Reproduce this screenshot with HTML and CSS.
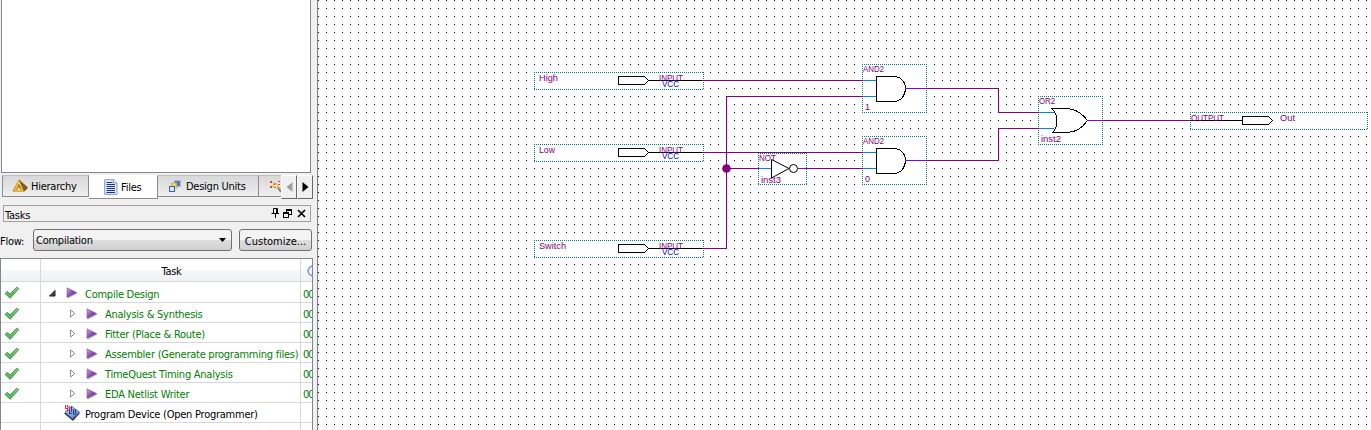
FILE: index.html
```html
<!DOCTYPE html>
<html lang="en">
<head>
<meta charset="utf-8">
<title>Schematic editor</title>
<link rel="stylesheet" href="styles.css">
</head>
<body>
<svg class="defs" width="0" height="0">
  <defs>
    <linearGradient id="gCheck" x1="0" y1="0" x2="0" y2="1"><stop offset="0" stop-color="#7fd07a"/><stop offset="1" stop-color="#4fae52"/></linearGradient>
    <linearGradient id="gPlay" x1="0" y1="0" x2="1" y2="1"><stop offset="0" stop-color="#d9a8e8"/><stop offset=".5" stop-color="#8d4fae"/><stop offset="1" stop-color="#3c2560"/></linearGradient>
    <linearGradient id="gGold" x1="0" y1="0" x2="1" y2="0"><stop offset="0" stop-color="#f5a81c"/><stop offset=".6" stop-color="#ffe25a"/><stop offset="1" stop-color="#f0b030"/></linearGradient>
    <linearGradient id="gChip" x1="0" y1="0" x2="1" y2="1"><stop offset="0" stop-color="#d6e4f8"/><stop offset="1" stop-color="#4a72b8"/></linearGradient>
    <symbol id="check" viewBox="0 0 16 14"><path d="M1 7.5L3.3 5.2L6 8L12.6 1.2L14.8 2.6L6.2 12.3Z" fill="url(#gCheck)" stroke="#3f8f43" stroke-width=".9" stroke-linejoin="round"/></symbol>
    <symbol id="play" viewBox="0 0 12 12"><path d="M2 2L11.5 6.5L2 11.5Z" fill="#b8b8c0"/><path d="M1 .8L10.6 5.6L1 10.4Z" fill="url(#gPlay)" stroke="#79559a" stroke-width=".6"/></symbol>
    <symbol id="twist" viewBox="0 0 6 9"><path d="M.6 .9V8L4.9 4.5Z" fill="#fff" stroke="#8c8c8c"/></symbol>
  </defs>
</svg>
<div class="app">
  <aside class="dock">
    <div class="tree"></div>
    <div class="tabs">
      <div class="tab hier">
        <svg width="17" height="14" viewBox="0 0 17 14"><path d="M7 .8L1 12.3H12.8L16 8.8Z" fill="#7a5316"/><path d="M7 .8L1 12H12Z" fill="url(#gGold)" stroke="#c8841a" stroke-width=".7"/><path d="M7 .8L12 12L15.8 8.6Z" fill="#8a5a1a"/><path d="M4.5 10.5L7 6.5L9.2 10.5M5.8 6.6L8.2 9M7 5V7" fill="none" stroke="#6c6432" stroke-width=".9"/></svg>
        <span>Hierarchy</span>
      </div>
      <div class="tab files">
        <svg width="14" height="16" viewBox="0 0 14 16"><path d="M.7 .7H9.6L13 4V15.3H.7Z" fill="#e3eefb" stroke="#7e9cc0"/><path d="M9.5 .8V4H13" fill="#fff" stroke="#7e9cc0"/><path d="M2.5 3.5H8.5M2.5 5.5H11M2.5 7.5H11M2.5 9.5H11M2.5 11.5H11M2.5 13.5H11" stroke="#1c2c90"/></svg>
        <span>Files</span>
      </div>
      <div class="tab units">
        <svg width="12" height="12" viewBox="0 0 12 12"><rect x="5.5" y=".5" width="6" height="6" fill="#5479b4" stroke="#a9bbd8"/><rect x="2.8" y="3" width="5" height="5" fill="#f7d55a" stroke="#b9a25a" stroke-width=".8"/><rect x=".5" y="6.5" width="5" height="5" fill="#d7e7f7" stroke="#3b649c"/></svg>
        <span>Design Units</span>
      </div>
      <div class="tab more">
        <svg width="12" height="13" viewBox="0 0 12 13"><path d="M1 1h2v2H1zM5 3h1v2H5zM9 1h2v1H9zM1 6h2v2H1zM5 7h2v1H5zM9 4h2v1H9z" fill="#d84a26"/><path d="M3 2h1v1H3zM6 3h2v2H6zM3 6h2v1H3zM4 4h1v1H4z" fill="#f3b72f"/><path d="M8 6L12 10" stroke="#f3b72f" stroke-width="2"/><path d="M9 8L12 12" stroke="#5979b5" stroke-width="1.5"/></svg>
      </div>
      <div class="arrow"><svg width="7" height="10"><path d="M6.5 0V10L.5 5Z" fill="#a0a0a0"/></svg></div>
      <div class="arrow"><svg width="7" height="10"><path d="M.5 0V10L6.5 5Z" fill="#000"/></svg></div>
    </div>
    <div class="title">
      <span>Tasks</span>
      <svg width="36" height="11" viewBox="0 0 36 11" fill="none" stroke="#000"><path d="M2.5 .5H6.5M2.5 .5V5.5M5.5 .5V5.5M6.5 .5V5.5M.5 5.5H8M4.5 6V10"/><path d="M15.5 1.5H20.5V6.5H18M15.5 1V4M15 2.5H21M12.5 4.5H17.5V9.5H12.5ZM12 5.5H18" shape-rendering="crispEdges"/><path d="M27 2L34 9M34 2L27 9" stroke-width="1.6"/></svg>
    </div>
    <div class="flow">
      <span class="flabel">Flow:</span>
      <div class="combo"><span>Compilation</span><svg width="7" height="4"><path d="M0 0H7L3.5 4Z"/></svg></div>
      <div class="button">Customize...</div>
    </div>
    <div class="table">
      <div class="row head"><div></div><div class="center">Task</div><div><svg class="clock" width="12" height="12" viewBox="0 0 12 12"><circle cx="6" cy="6" r="4.8" fill="#eef3fa" stroke="#8498bd" stroke-width="1.6"/></svg></div></div>
      <div class="row first"><div class="ok"><svg width="16" height="14"><use href="#check"/></svg></div><div class="name top"><svg width="7" height="7"><path d="M6 .5V6H.5Z" fill="#444" stroke="#222"/></svg><svg width="12" height="12"><use href="#play"/></svg><span>Compile Design</span></div><div class="time">00</div></div>
      <div class="row"><div class="ok"><svg width="16" height="14"><use href="#check"/></svg></div><div class="name"><svg width="6" height="9"><use href="#twist"/></svg><svg width="12" height="12"><use href="#play"/></svg><span>Analysis &amp; Synthesis</span></div><div class="time">00</div></div>
      <div class="row"><div class="ok"><svg width="16" height="14"><use href="#check"/></svg></div><div class="name"><svg width="6" height="9"><use href="#twist"/></svg><svg width="12" height="12"><use href="#play"/></svg><span>Fitter (Place &amp; Route)</span></div><div class="time">00</div></div>
      <div class="row"><div class="ok"><svg width="16" height="14"><use href="#check"/></svg></div><div class="name"><svg width="6" height="9"><use href="#twist"/></svg><svg width="12" height="12"><use href="#play"/></svg><span>Assembler (Generate programming files)</span></div><div class="time">00</div></div>
      <div class="row"><div class="ok"><svg width="16" height="14"><use href="#check"/></svg></div><div class="name"><svg width="6" height="9"><use href="#twist"/></svg><svg width="12" height="12"><use href="#play"/></svg><span>TimeQuest Timing Analysis</span></div><div class="time">00</div></div>
      <div class="row"><div class="ok"><svg width="16" height="14"><use href="#check"/></svg></div><div class="name"><svg width="6" height="9"><use href="#twist"/></svg><svg width="12" height="12"><use href="#play"/></svg><span>EDA Netlist Writer</span></div><div class="time">00</div></div>
      <div class="row"><div></div><div class="name device"><svg width="16" height="16" viewBox="0 0 16 16"><path d="M0 8.5L8 3L16 8L9 16Z" fill="#2c4271"/><path d="M1 7L8 1.5L15.5 7L8.5 13.5Z" fill="url(#gChip)" stroke="#4769a4" stroke-width=".7"/><path d="M1.5 0V3.5H3.5V6.5M3.5 0V2H5.5V6" fill="none" stroke="#e02850" stroke-width="1.1"/><path d="M5.5 5V8.5H8M7.5 1V7M9.5 4V9H12M11.5 4V8" fill="none" stroke="#2a3f9c" stroke-width="1.1"/></svg><span>Program Device (Open Programmer)</span></div><div></div></div>
      <div class="row last"><div></div><div></div><div></div></div>
    </div>
  </aside>
  <main class="canvas">
    <svg width="1053" height="430" viewBox="318 0 1053 430">
      <defs>
        <pattern id="grid" x="318" y="0" width="8" height="8" patternUnits="userSpaceOnUse"><rect width="1" height="1" fill="#000"/></pattern>
        <g id="pin"><path class="fill" d="M0 -8H170V9H0Z"/><path class="dots" d="M0 -7.5H170M0 9.5H170M.5 -8V10M169.5 -8V10"/><path class="ink" d="M84.5 -3.5H110.5L114.5 .5L110.5 4.5H84.5ZM114.5 .5H168"/><text class="t" x="125" y="1" textLength="24" lengthAdjust="spacingAndGlyphs">INPUT</text><text class="t vcc" x="128" y="7" textLength="17" lengthAdjust="spacingAndGlyphs">VCC</text></g>
        <g id="and"><path class="fill" d="M0 0H65V49H0Z"/><path class="dots" d="M0 .5H65M0 48.5H65M.5 0V49M64.5 0V49"/><path class="stub" d="M1 16.5H14M1 32.5H14"/><path class="ink" d="M14.5 12.5H32C39 12.5 43.5 18 43.5 24.5S39 37.5 32 37.5H14.5Z"/><path class="out" d="M43 24.5H65"/><text class="t" x="1" y="8" textLength="21" lengthAdjust="spacingAndGlyphs">AND2</text></g>
      </defs>
      <rect x="318" width="1053" height="430" fill="url(#grid)"/>
      <use href="#pin" x="534" y="80"/><use href="#pin" x="534" y="152"/><use href="#pin" x="534" y="248"/>
      <use href="#and" x="862" y="64"/><use href="#and" x="862" y="136"/>
      <path class="fill" d="M758 153H807V185H758ZM1038 96H1103V145H1038ZM1190 112H1368V130H1190Z"/>
      <path class="dots" d="M758 153.5H807M758 184.5H807M758.5 153V185M806.5 153V185M1038 96.5H1103M1038 144.5H1103M1038.5 96V145M1102.5 96V145M1190 112.5H1368M1190 129.5H1368M1190.5 112V130M1367.5 112V130"/>
      <path class="stub" d="M759 168.5H771M1039 112.5H1054M1039 128.5H1054"/>
      <path class="ink smooth" d="M771.5 159.5V178L789 168.5Z"/><circle class="ink smooth" cx="793.5" cy="168.5" r="4"/>
      <path class="ink" d="M1051.5 108.5H1066C1077 109 1082 114 1087.5 120.5C1082 128 1077 132 1066 132.5H1052.5C1058.5 127 1058.5 114 1051.5 108.5"/>
      <path class="out" d="M798 168.5H807M1087 120.5H1103"/>
      <path class="ink" d="M1191 120.5H1242M1242.5 116.5H1268.5L1272.5 120.5L1268.5 124.5H1242.5Z"/>
      <path class="wire" d="M702 80.5H863M702 152.5H863M702 248.5H726.5V96.5H863M726.5 168.5H759M806 168.5H863M926 88.5H998.5V112.5H1039M926 160.5H998.5V128.5H1039M1102 120.5H1191"/>
      <circle cx="726.5" cy="168.5" r="4.3" fill="#800080"/>
      <text class="t" x="539" y="81" textLength="19" lengthAdjust="spacingAndGlyphs">High</text><text class="t" x="539" y="153" textLength="16" lengthAdjust="spacingAndGlyphs">Low</text><text class="t" x="539" y="249" textLength="27" lengthAdjust="spacingAndGlyphs">Switch</text>
      <text class="t" x="865" y="110">1</text><text class="t" x="865" y="182">0</text>
      <text class="t" x="759" y="161" textLength="17" lengthAdjust="spacingAndGlyphs">NOT</text><text class="t" x="761" y="183" textLength="20" lengthAdjust="spacingAndGlyphs">inst3</text>
      <text class="t" x="1039" y="104" textLength="16" lengthAdjust="spacingAndGlyphs">OR2</text><text class="t" x="1041" y="142" textLength="20" lengthAdjust="spacingAndGlyphs">inst2</text>
      <text class="t" x="1191" y="120.5" textLength="33" lengthAdjust="spacingAndGlyphs">OUTPUT</text><text class="t" x="1280" y="121" textLength="15" lengthAdjust="spacingAndGlyphs">Out</text>
    </svg>
  </main>
</div>
</body>
</html>
```
FILE: styles.css
```css
* { box-sizing: border-box; }
body { margin: 0; overflow: hidden; background: #fff; font-family: "DejaVu Sans Condensed", "DejaVu Sans", sans-serif; font-stretch: condensed; font-size: 11px; letter-spacing: -.25px; color: #000; }
svg { display: block; flex: none; }
.defs { position: absolute; }
.app { display: flex; width: 1371px; height: 430px; overflow: hidden; }
.dock { display: flex; flex-direction: column; width: 318px; height: 430px; flex: none; background: #f0f0f0; border-right: 1px solid #808080; overflow: hidden; }
.tree { height: 173px; width: 310px; margin-left: 1px; background: #fff; border: 1px solid #828790; border-top: 0; flex: none; }
.tabs { display: flex; align-items: flex-start; margin: 2px 0 0 2px; height: 24px; width: 311px; flex: none; white-space: nowrap; }
.tab { display: flex; align-items: center; height: 22px; background: linear-gradient(#d8d8d8, #efefef); border: 1px solid #898c95; border-top-color: #c0c0c0; border-left: 0; flex: none; }
.hier { width: 87px; padding-left: 9px; gap: 2px; border-left: 1px solid #898c95; }
.files { width: 69px; height: 24px; padding-left: 15px; gap: 3px; background: #fff; border-top-color: #fff; }
.units { width: 101px; padding-left: 11px; gap: 5px; }
.more { width: 22px; padding-left: 10px; border-right: 0; overflow: hidden; }
.arrow { display: flex; align-items: center; justify-content: center; width: 16px; height: 24px; background: #f0f0f0; border: 1px solid #fff; border-right-color: #696969; border-bottom-color: #696969; flex: none; }
.title { display: flex; align-items: center; justify-content: space-between; width: 308px; height: 17px; margin: 6px 0 0 3px; padding: 0 3px 0 1px; border: 1px solid #a0a0a0; flex: none; }
.title span { padding-top: 3px; }
.flow { display: flex; align-items: center; height: 22px; margin-top: 7px; flex: none; }
.flabel { width: 33px; padding-top: 2px; }
.combo, .button { height: 22px; border: 1px solid #707070; border-radius: 3px; background: linear-gradient(#f3f3f3 0 48%, #dedede 52%, #d0d0d0); }
.combo { display: flex; align-items: center; justify-content: space-between; width: 199px; padding: 0 5px 0 2px; }
.combo span { padding-top: 1px; }
.button { width: 73px; margin-left: 7px; padding-top: 5px; text-align: center; letter-spacing: 0; }
.table { width: 313px; height: 172px; margin-top: 7px; background: #fff; border: 1px solid #828790; border-bottom: 0; overflow: hidden; flex: none; }
.row { display: grid; grid-template-columns: 40px 260px 11px; height: 20px; color: #008000; }
.row > div { display: flex; align-items: center; overflow: hidden; white-space: nowrap; border-right: 1px solid #d8d8d8; border-bottom: 1px solid #d8d8d8; }
.row > div:last-child { border-right: 0; }
.row.head { height: 23px; color: #000; background: linear-gradient(#fff 0 45%, #f6f7f8 50%, #f1f2f4); }
.row.first { height: 21px; }
.row > .center { justify-content: center; padding: 3px 0 0 2px; }
.clock { margin: 2px 0 0 6px; }
.row > .ok { padding: 2px 0 0 3px; }
.row > .name { padding: 2px 0 0 29px; }
.row > .top { padding-left: 8px; }
.name span { padding-top: 2px; }
.name svg:first-child { margin-right: 10px; }
.name svg:nth-child(2) { margin-right: 7px; }
.row > .device { padding: 1px 0 0 23px; color: #000; }
.device span { padding-top: 3px; }
.name.device svg { margin-right: 5px; }
.row > .time { padding: 4px 0 0 2px; letter-spacing: -1px; }
.canvas { flex: 1; background: #fff; }
.fill { fill: #fff; }
.dots { fill: none; stroke: #008080; stroke-dasharray: 1 1; shape-rendering: crispEdges; }
.ink { fill: none; stroke: #000; shape-rendering: crispEdges; }
.ink.smooth { shape-rendering: auto; }
.wire, .stub, .out { fill: none; stroke: #800080; shape-rendering: crispEdges; }
.stub { stroke: #0080ff; }
.out { stroke: #8000ff; }
.t { font: 9px "Liberation Sans", Arial, sans-serif; letter-spacing: 0; fill: #800080; }
.vcc { fill: #0000ff; }
```
